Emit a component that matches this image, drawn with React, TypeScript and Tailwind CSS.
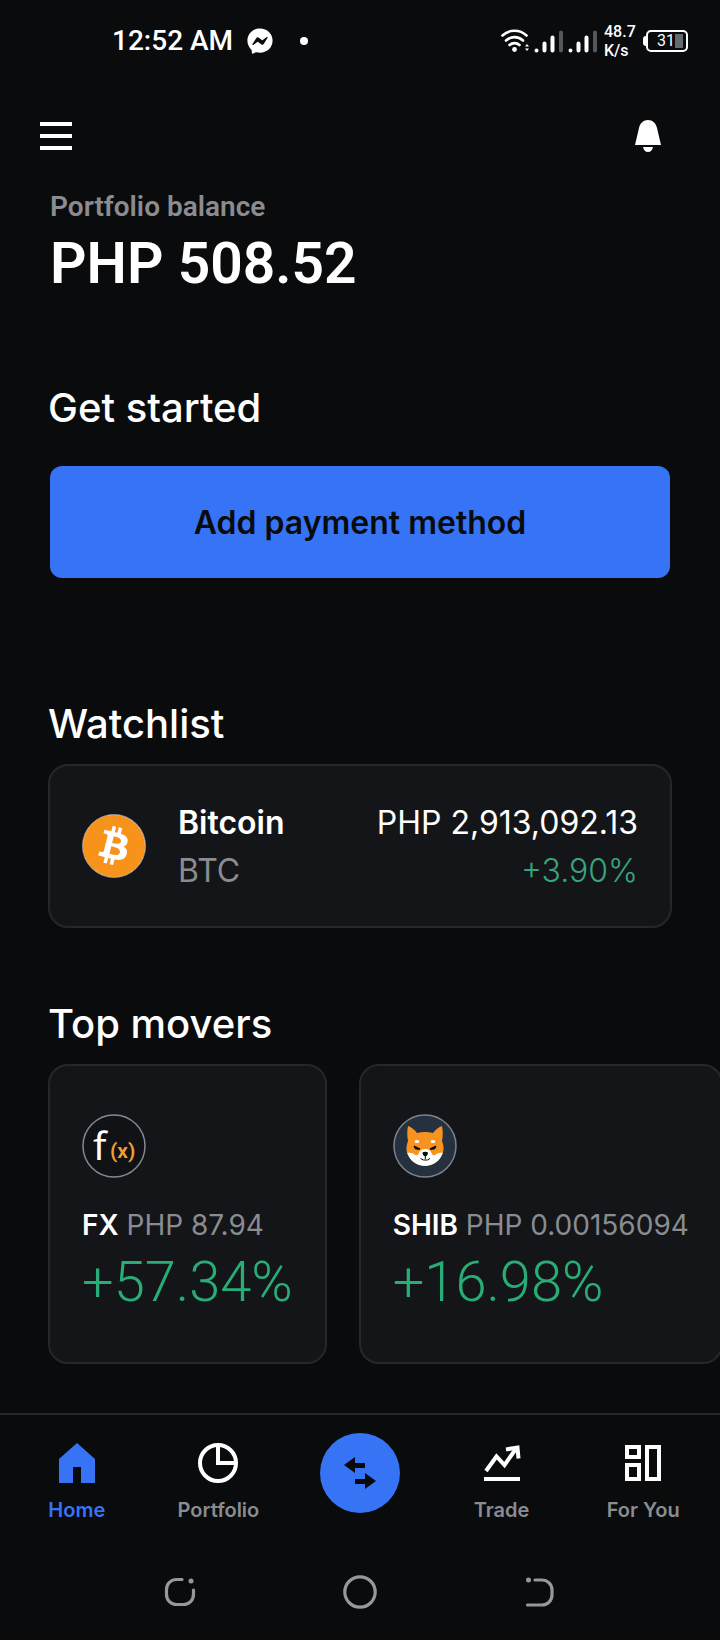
import type { ReactNode } from "react"
import { FaFacebookMessenger } from "react-icons/fa"
import { SiBitcoin } from "react-icons/si"

type Mover = {
  symbol: string
  price: string
  change: string
  icon: ReactNode
}

type Tab = {
  label: string
  icon: ReactNode
  active?: boolean
}

function StatusBar() {
  return (
    <div className="flex h-[82px] items-center justify-between pr-8 pl-28 font-[Roboto,sans-serif]">

      <div className="flex items-center">
        <span className="text-[28px] leading-8 font-medium">12:52 AM</span>
        <FaFacebookMessenger className="ml-3.5 size-[26px]" />
        <span className="ml-[27px] size-2 rounded-full bg-white" />
      </div>

      <div className="flex items-center">
        <svg
          viewBox="0 0 100 26"
          className="h-[26px] w-[100px]"
          fill="none"
          stroke="currentColor"
          strokeLinecap="round"
        >
          <path d="M2.500 7.500a17.500 17.500 0 0 1 24 0M6 12.500a12.500 12.500 0 0 1 17 0M9.500 17a7.500 7.500 0 0 1 10 0" strokeWidth="2.600" />
          <circle cx="14.500" cy="21.500" r="2.400" fill="currentColor" stroke="none" />
          <path d="M25 18.500l2-2.500 2 2.500zM25 20.500l2 2.500 2-2.500z" fill="currentColor" stroke="none" />
          <path d="M36.500 22.500v0M44.500 22.500v-7M52.500 22.500v-13" strokeWidth="4" />
          <path d="M61 22.500v-18" strokeWidth="4" stroke="#55585b" />
          <path d="M70.500 22.500v0M78.500 22.500v-7M86.500 22.500v-13" strokeWidth="4" />
          <path d="M95 22.500v-18" strokeWidth="4" stroke="#55585b" />
        </svg>

        <div className="ml-1 w-[39px] text-base leading-[19px] font-medium">
          <p>48.7</p>
          <p>K/s</p>
        </div>

        <div className="flex items-center">
          <span className="h-2.5 w-[3px] rounded-l bg-white" />
          <div className="flex h-[22px] w-[42px] items-center justify-end rounded-[5px] border-2 border-white pr-[3px] text-base leading-4">
            31
            <span className="h-3.5 w-2 bg-[#66696d]" />
          </div>
        </div>
      </div>

    </div>
  )
}

function FxIcon() {
  return (
    <svg viewBox="0 0 64 64" className="size-16">
      <circle cx="32" cy="32" r="31" fill="#101216" stroke="#85888c" strokeWidth="1.500" />
      <text x="11" y="46" fill="#fff" fontFamily="Noto Sans" fontWeight="400" fontSize="39">f</text>
      <text x="28" y="44" fill="#f0a030" fontFamily="Roboto" fontWeight="600" fontSize="21">(x)</text>
    </svg>
  )
}

function ShibIcon() {
  return (
    <svg viewBox="0 0 64 64" className="size-16">
      <circle cx="32" cy="32" r="31" fill="#26313f" stroke="#7d838b" strokeWidth="1.500" />
      <path d="M15 12c3 1 7 4 9 7 5-1.500 11-1.500 16 0 2-3 6-6 9-7 1 5 1 10 0 15 2 5 2 9 .8 12C47 47 40 51.500 32 51.500S17 47 14.200 39c-1.200-3-1-7 .8-12-1-5-1-10 0-15z" fill="#f7931e" />
      <path d="M14.200 39c3-.8 6 0 8 2 2 .5 3 0 3.500-1.500.8-3 3-4.500 6.500-4.500s5.700 1.500 6.500 4.500c.5 1.500 1.500 2 3.500 1.500 2-2 5-2.800 7.600-2C47 47 40 52 32 52s-15-5-17.800-13z" fill="#fff" />
      <ellipse cx="24" cy="27.500" rx="2.300" ry="1.600" fill="#fff" />
      <ellipse cx="40" cy="27.500" rx="2.300" ry="1.600" fill="#fff" />
      <path d="M21 32l6 2.800-.8.600-4-.6zM43 32l-6 2.800.8.600 4-.6z" fill="#080a0c" stroke="#080a0c" />
      <path d="M29.500 38.500c1.500-1 4-1 5.500 0 0 2.200-1.200 3.500-2.200 3.800V45h-1v-2.700c-1.200-.4-2.300-1.600-2.300-3.800z" fill="#080a0c" />
      <path d="M27.500 44.500l3 1.500h4l2.500-1.500" fill="none" stroke="#080a0c" />
    </svg>
  )
}

const movers: Mover[] = [
  { symbol: "FX", price: "PHP 87.94", change: "+57.34%", icon: <FxIcon /> },
  { symbol: "SHIB", price: "PHP 0.00156094", change: "+16.98%", icon: <ShibIcon /> },
]

const leftTabs: Tab[] = [
  {
    label: "Home",
    active: true,
    icon: (
      <svg viewBox="0 0 40 40" className="size-10" fill="currentColor">
        <path d="M20 0l18 16v24H24V24h-8v16H2V16z" />
      </svg>
    ),
  },
  {
    label: "Portfolio",
    icon: (
      <svg viewBox="0 0 40 40" className="size-10" fill="none" stroke="currentColor" strokeWidth="4">
        <circle cx="20" cy="20" r="18" />
        <path d="M20 2v18h18" />
      </svg>
    ),
  },
]

const rightTabs: Tab[] = [
  {
    label: "Trade",
    icon: (
      <svg viewBox="0 0 40 40" className="size-10" fill="none" stroke="currentColor" strokeWidth="4">
        <path d="M2 36h36M4 28l10.500-14.500 8 8.500L34.500 5" />
        <path d="M24 6.500l11.500-2 1 11" />
      </svg>
    ),
  },
  {
    label: "For You",
    icon: (
      <svg viewBox="0 0 40 40" className="size-10" fill="none" stroke="currentColor" strokeWidth="4">
        <path d="M4 4h12v10H4zM4 22h12v14H4zM24 4h12v32H24z" />
      </svg>
    ),
  },
]

function TabLink({ tab }: { tab: Tab }) {
  return (
    <a
      href="#"
      className={`flex flex-col items-center gap-[15px] pt-2.5 ${tab.active ? "text-[#3773f5]" : "text-white"}`}
    >
      {tab.icon}
      <span
        className={`text-xl leading-6 font-semibold ${tab.active ? "" : "text-[#8a8c90]"}`}
      >
        {tab.label}
      </span>
    </a>
  )
}

export default function App() {
  return (
    <div className="flex min-h-screen flex-col overflow-x-hidden bg-[#090b0d] font-[Inter,sans-serif] text-white">

      <StatusBar />

      <header className="flex h-[109px] items-center justify-between pr-14 pb-0.5 pl-10">
        <button type="button" aria-label="Menu" className="flex flex-col gap-2">
          <span className="h-1 w-8 bg-white" />
          <span className="h-1 w-8 bg-white" />
          <span className="h-1 w-8 bg-white" />
        </button>

        <button type="button" aria-label="Notifications">
          <svg viewBox="0 0 32 32" className="size-8" fill="currentColor">
            <path d="M3 25L7 8c1-5 4.500-8 9-8s8 3 9 8l4 17zM11 27h10c-.5 3-2.500 5-5 5s-4.500-2-5-5z" />
          </svg>
        </button>
      </header>

      <main className="flex-1">

        <section className="px-[50px] font-[Roboto,sans-serif]">
          <p className="text-[28px] leading-8 font-semibold text-[#8a8c90]">
            Portfolio balance
          </p>
          <p className="mt-2 text-[57px] leading-[66px] font-semibold">
            PHP 508.52
          </p>
        </section>

        <section className="mt-[87px] px-12">
          <h2 className="text-[40px] leading-[48px] font-medium">Get started</h2>
          <div className="mt-[34px] px-0.5">
            <button
              type="button"
              className="h-28 w-full rounded-xl bg-[#3773f5] pt-0.5 text-[32px] font-semibold text-[#090b0d]"
            >
              Add payment method
            </button>
          </div>
        </section>

        <section className="mt-[122px] px-12">
          <h2 className="text-[40px] leading-[48px] font-medium">Watchlist</h2>
          <div className="mt-4 flex items-center rounded-[20px] border-2 border-[#25282b] bg-[#141519] px-8 py-[31px]">
            <div className="rounded-full border border-[#8a8c90] bg-white">
              <SiBitcoin className="size-[62px] text-[#f7931a]" />
            </div>
            <div className="ml-8 flex-1 pt-0.5 text-[32px] leading-[48px]">
              <p className="font-semibold">Bitcoin</p>
              <p className="text-[#8a8c90]">BTC</p>
            </div>
            <div className="pt-0.5 text-right text-[32px] leading-[48px]">
              <p>PHP 2,913,092.13</p>
              <p className="font-light text-[#36a57c]">+3.90%</p>
            </div>
          </div>
        </section>

        <section className="mt-[72px]">
          <h2 className="px-12 text-[40px] leading-[48px] font-medium">Top movers</h2>
          <div className="mt-4 flex gap-8 overflow-x-auto px-12 [scrollbar-width:none]">
            {movers.map((mover) => (
              <div
                key={mover.symbol}
                className="shrink-0 rounded-[20px] border-2 border-[#25282b] bg-[#141519] px-8 pt-12 pb-[46px]"
              >
                {mover.icon}
                <p className="mt-[29px] text-[28px] leading-9 text-[#8a8c90]">
                  <span className="font-semibold text-white">{mover.symbol}</span>{" "}
                  {mover.price}
                </p>
                <p className="mt-1.5 font-[Roboto,sans-serif] text-[56px] leading-[67px] font-[350] text-[#27ad75]">
                  {mover.change}
                </p>
              </div>
            ))}
          </div>
        </section>

      </main>

      <nav className="mt-12 grid grid-cols-5 items-start border-t-2 border-[#25282b] px-1.5 pt-[18px] pb-[22px]">
        {leftTabs.map((tab) => (
          <TabLink key={tab.label} tab={tab} />
        ))}

        <button
          type="button"
          aria-label="Buy or sell"
          className="flex size-20 items-center justify-center justify-self-center rounded-full bg-[#3773f5] text-[#090b0d]"
        >
          <svg viewBox="0 0 32 32" className="size-8" fill="currentColor">
            <path d="M0 8l11-8v6h10v5H11v5zM11 22h10v-6l11 8-11 8v-5H11z" />
          </svg>
        </button>

        {rightTabs.map((tab) => (
          <TabLink key={tab.label} tab={tab} />
        ))}
      </nav>

      <div className="grid h-24 grid-cols-3 items-center justify-items-center px-[90px] text-[#97989a]">
        <button type="button" aria-label="Recent apps">
          <svg viewBox="0 0 34 34" className="size-[34px]" fill="none" stroke="currentColor" strokeWidth="3.200" strokeLinecap="round">
            <path d="M19 4.500h-5.500a10 10 0 0 0-10 10v5a10 10 0 0 0 10 10h7a10 10 0 0 0 10-10V15" />
            <circle cx="28" cy="6" r="2.500" fill="currentColor" stroke="none" />
          </svg>
        </button>
        <button type="button" aria-label="Home screen">
          <svg viewBox="0 0 34 34" className="size-[34px]" fill="none" stroke="currentColor" strokeWidth="3.200">
            <circle cx="17" cy="17" r="15.200" />
          </svg>
        </button>
        <button type="button" aria-label="Back">
          <svg viewBox="0 0 34 34" className="size-[34px]" fill="none" stroke="currentColor" strokeWidth="3.200" strokeLinecap="round">
            <path d="M12 5h7a10 10 0 0 1 10 10v5a10 10 0 0 1-10 10H4.500" />
            <circle cx="5.500" cy="5" r="2.500" fill="currentColor" stroke="none" />
          </svg>
        </button>
      </div>

    </div>
  )
}
